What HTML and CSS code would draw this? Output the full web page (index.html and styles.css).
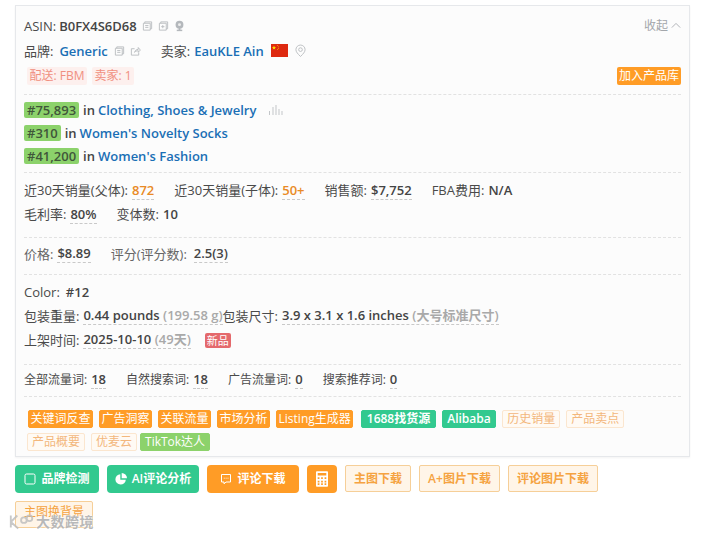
FILE: index.html
```html
<!DOCTYPE html>
<html lang="zh">
<head>
<meta charset="utf-8">
<title>ASIN</title>
<link rel="stylesheet" href="styles.css">
</head>
<body>
<div class="card">
  <section class="sec head">
    <div class="row r25 between">
      <div class="inline"><span class="lab lab-asin">ASIN:</span><b class="asin">B0FX4S6D68</b>
        <svg class="ic first" viewBox="0 0 12 12"><path d="M3 3V1.5h7.5V9H9M1.5 3H9v7.5H1.5zM3.500 5.500H7M3.500 7.500H7"/></svg>
        <svg class="ic" viewBox="0 0 12 12"><path d="M3 3V1.5h7.5V9H9M1.5 3H9v7.5H1.5zM3.500 6.700H7M5.200 5v3.400"/></svg>
        <svg class="ic fill" viewBox="0 0 12 12"><circle cx="6" cy="4.500" r="4.300"/><circle class="hole" cx="6" cy="4.500" r="1.600"/><rect x="3" y="10" width="6" height="1.600"/><rect x="5" y="8" width="2" height="3"/></svg>
      </div>
      <div class="collapse">收起<svg viewBox="0 0 12 8"><path d="M1 6.500 6 1.500l5 5"/></svg></div>
    </div>
    <div class="row r25">
      <span class="lab lab-brand">品牌:</span><a class="link">Generic</a>
      <svg class="ic gap8" viewBox="0 0 12 12"><path d="M3 3V1.5h7.5V9H9M1.5 3H9v7.5H1.5zM3.500 5.500H7M3.500 7.500H7"/></svg>
      <svg class="ic" viewBox="0 0 12 12"><path d="M9.500 7.500v3h-8v-7h3.500M5 7.500c.3-2 2-3.300 4-3.300V2.200l2.300 2.800L9 7.300V5.700c-1.600 0-3 .5-4 1.800z"/></svg>
      <span class="lab seller">卖家:</span><a class="link">EauKLE Ain</a>
      <svg class="flag" viewBox="0 0 17 13"><rect width="17" height="13" fill="#de2910"/><path fill="#ffde00" d="M3 1.500l.6 1.500 1.500.1-1.200 1 .4 1.500L3 4.800l-1.300.8.400-1.500-1.200-1 1.500-.1zM6 1h.7v.7H6zM7 2.500h.7v.7H7zM7 4h.7v.7H7zM6 5.200h.7v.7H6z"/></svg>
      <svg class="ic pin" viewBox="0 0 12 14"><path d="M6 13C3 10 1 8 1 5.500a5 5 0 0 1 10 0C11 8 9 10 6 13z"/><circle cx="6" cy="5.500" r="2"/></svg>
    </div>
    <div class="row between badges">
      <div class="inline"><span class="pink">配送: FBM</span><span class="pink">卖家: 1</span></div>
      <span class="add">加入产品库</span>
    </div>
  </section>

  <section class="sec ranks">
    <div class="rank"><span class="num">#75,893</span><b>in</b><a class="link">Clothing, Shoes &amp; Jewelry</a>
      <svg class="bars" viewBox="0 0 15 12"><path d="M1.500 7v4M5 3v8M8 1v10M11 5v6M14 7v4"/></svg></div>
    <div class="rank"><span class="num">#310</span><b>in</b><a class="link">Women's Novelty Socks</a></div>
    <div class="rank"><span class="num">#41,200</span><b>in</b><a class="link">Women's Fashion</a></div>
  </section>

  <section class="sec stats">
    <div class="row r24">
      <span class="item">近30天销量(父体):<b class="u or">872</b></span>
      <span class="item">近30天销量(子体):<b class="u or">50+</b></span>
      <span class="item">销售额:<b class="u">$7,752</b></span>
      <span class="item">FBA费用:<b>N/A</b></span>
    </div>
    <div class="row r24">
      <span class="item">毛利率:<b class="u">80%</b></span>
      <span class="item">变体数:<b>10</b></span>
    </div>
  </section>

  <section class="sec price">
    <div class="row">
      <span class="item"><span class="muted">价格:</span><b class="u">$8.89</b></span>
      <span class="item"><span class="muted">评分(评分数):</span><b class="u wide">2.5(3)</b></span>
    </div>
  </section>

  <section class="sec attrs">
    <div class="row r24">Color:<b class="plain">#12</b></div>
    <div class="row r24">包装重量:<b class="u tight">0.44 pounds <span class="grey">(199.58 g)</span></b>包装尺寸:<b class="u tight">3.9 x 3.1 x 1.6 inches <span class="grey">(大号标准尺寸)</span></b></div>
    <div class="row r24">上架时间:<b class="u tight">2025-10-10 <span class="grey">(49天)</span></b><span class="new">新品</span></div>
  </section>

  <section class="sec traffic">
    <div class="row">
      <span class="item"><span class="small">全部流量词:</span><b class="u">18</b></span>
      <span class="item"><span class="small">自然搜索词:</span><b class="u">18</b></span>
      <span class="item"><span class="small">广告流量词:</span><b class="u">0</b></span>
      <span class="item"><span class="small">搜索推荐词:</span><b class="u">0</b></span>
    </div>
  </section>

  <div class="tags">
    <span class="tag o">关键词反查</span><span class="tag o">广告洞察</span><span class="tag o">关联流量</span><span class="tag o">市场分析</span><span class="tag o">Listing生成器</span><span class="tag g">1688找货源</span><span class="tag g">Alibaba</span><span class="tag l">历史销量</span><span class="tag l">产品卖点</span><span class="tag l">产品概要</span><span class="tag l">优麦云</span><span class="tag t">TikTok达人</span>
  </div>
</div>

<div class="actions">
  <button class="btn green b1"><svg class="bi" viewBox="0 0 12 12"><rect x="1" y="1" width="10" height="10" rx="1.500"/></svg>品牌检测</button>
  <button class="btn green b2"><svg class="bi solid" viewBox="0 0 12 12"><path d="M5.300 1.200a5.200 5.200 0 1 0 5.500 5.500H5.300z"/><path d="M6.700 0v5.300H12A5.300 5.300 0 0 0 6.700 0z"/></svg>AI评论分析</button>
  <button class="btn orange b3"><svg class="bi" viewBox="0 0 12 12"><path d="M1.500 1.500h9v7.500H6l-2 1.800V9H1.500z"/><path d="M3.800 5.200h.8M5.700 5.200h.8M7.600 5.200h.8"/></svg>评论下载</button>
  <button class="btn orange calc"><svg viewBox="0 0 14 18"><path fill="#fff" fill-rule="evenodd" d="M1 0h12a1 1 0 0 1 1 1v16a1 1 0 0 1-1 1H1a1 1 0 0 1-1-1V1a1 1 0 0 1 1-1zm1 2v3h10V2zm0 5v2h2V7zm4 0v2h2V7zm4 0v2h2V7zm-8 4v2h2v-2zm4 0v2h2v-2zm4 0v2h2v-2zm-8 3v2h2v-2zm4 0v2h2v-2zm4 0v2h2v-2z"/></svg></button>
  <button class="btn light b5">主图下载</button>
  <button class="btn light b6">A+图片下载</button>
  <button class="btn light b7">评论图片下载</button>
  <button class="btn light b8">主图换背景</button>
</div>

<div class="mark"><svg viewBox="0 0 30 18"><path d="M3 2v13M3 9l7-7M3 9l8 7M14 7a3 3 0 1 1 6 0a3 3 0 1 1-6 0M20 5a3 3 0 1 1 6 0a3 3 0 1 1-6 0"/></svg><span>大数跨境</span></div>
</body>
</html>
```
FILE: styles.css
```css
* { box-sizing: border-box; }
html, body { margin: 0; padding: 0; }
body {
  position: relative;
  width: 709px;
  height: 536px;
  overflow: hidden;
  padding: 5px 0 0 15px;
  background: #fff;
  color: #4a4a4a;
  font: 13px/18px "Open Sans", "Noto Sans CJK SC", sans-serif;
}
b { font-weight: 600; color: #444; }
.card {
  width: 675px;
  height: 452px;
  padding: 0 8px;
  background: #fcfcfc;
  border: 1px solid #e6e8eb;
  box-shadow: 0 1px 2px rgba(0,0,0,.05);
}
.sec { border-bottom: 1px dashed #e2e2e2; }
.row { display: flex; align-items: center; white-space: nowrap; }
.inline { display: flex; align-items: center; }
.between { justify-content: space-between; }
.r25 { height: 25px; }
.r24 { height: 24px; }
.head { height: 89px; padding-top: 7px; }
.lab { margin-right: 4px; }
.lab-asin { margin-right: 3px; }
.lab-brand { margin-right: 6px; }
.asin { color: #444; }
.ic { width: 11px; height: 12px; margin-left: 5px; fill: none; stroke: #b9bcc0; stroke-width: 1; }
.ic.first { margin-left: 5px; }
.ic.fill { fill: #b4b8bc; stroke: none; }
.ic.fill .hole { fill: #eee; }
.gap8 { margin-left: 6px; }
.seller { margin-left: 20px; }
.flag { width: 17px; height: 13px; margin-left: 7px; }
.pin { height: 14px; margin-left: 7px; }
.link { color: #1a6fb5; font-weight: 600; }
.collapse { display: flex; align-items: center; color: #a3a6ab; font-size: 12px; }
.collapse svg { width: 10px; height: 7px; margin-left: 3px; fill: none; stroke: #a3a6ab; }
.badges { height: 18px; margin-top: 4px; font-size: 12px; }
.pink { margin: 0 5px 0 3px; padding: 0 2.5px; background: #fdf0ee; color: #f08f80; border-radius: 2px; }
.pink + .pink { margin-left: 0; }
.add { padding: 0 2px; height: 18px; background: #ff9c26; color: #fff; border-radius: 2px; }
.ranks { height: 78px; padding-top: 3px; }
.rank { display: flex; align-items: center; height: 23px; white-space: nowrap; }
.num { height: 16px; line-height: 16px; padding: 0 3px; margin-right: 4px; background: #8cd26b; color: #40563a; font-weight: 600; border-radius: 2px; }
.rank b { margin-right: 3px; }
.bars { width: 15px; height: 12px; margin-left: 12px; fill: none; stroke: #c3c6c9; }
.stats { height: 65px; padding-top: 5px; }
.item { display: inline-flex; align-items: center; margin-right: 20px; }
.item b { margin-left: 4px; }
.small { font-size: 12px; }
.u { border-bottom: 1px dashed #c9c9c9; }
.or { color: #e98a25; }
.item .wide { margin-left: 7px; }
.muted { color: #666; }
.price { height: 37px; padding-top: 6px; }
.attrs { height: 90px; padding-top: 5px; }
.plain { margin-left: 6px; }
.tight { margin-left: 4px; line-height: 17px; }
.grey { color: #a9a9a9; }
.new { margin-left: 14px; padding: 0 2px; height: 15px; line-height: 15px; font-size: 11px; background: #e4696c; color: #fff; border-radius: 2px; }
.traffic { height: 32px; padding-top: 5px; }
.tags { display: flex; flex-wrap: wrap; gap: 5px 6px; padding: 13px 0 0 4px; font-size: 12px; }
.tag { height: 18px; line-height: 16px; padding: 0 1.5px; border: 1px solid; border-radius: 2px; white-space: nowrap; }
.tag.o { background: #ff9c26; border-color: #ff9c26; color: #fff; }
.tag.g { background: #32c98f; border-color: #32c98f; color: #fff; font-weight: 600; padding: 0 4.5px; }
.tag.g:nth-child(6) { margin-left: 2px; }
.tag.l { background: #fffaf4; border-color: #fbe6cf; color: #f3b77c; padding: 0 4px; }
.tag.t { background: #8cd26b; border-color: #8cd26b; color: #fff; padding: 0 4px; margin-left: -3px; }
.tags .tag:nth-child(10) { margin-left: -1px; }
.actions { display: flex; flex-wrap: wrap; gap: 8px; margin-top: 8px; width: 600px; font-size: 12px; }
.btn { height: 28px; padding: 0; border: 0; border-radius: 4px; font: inherit; display: inline-flex; align-items: center; justify-content: center; }
.green { background: #32c98f; color: #fff; font-weight: 600; }
.orange { background: #ff9c26; color: #fff; font-weight: 600; }
.light { height: 27px; background: #fff5e8; border: 1px solid #f6cf98; border-radius: 2px; color: #f5a341; font-weight: 600; }
.bi { width: 12px; height: 12px; margin-right: 5px; fill: none; stroke: #fff; stroke-width: 1; }
.bi.solid { fill: #fff; stroke: none; }
.b1 { width: 84px; }
.b2 { width: 92px; }
.b3 { width: 92px; }
.calc { width: 30px; }
.calc svg { width: 12px; height: 16px; }
.b5 { width: 66px; }
.b6 { width: 81px; }
.b7 { width: 90px; }
.b8 { width: 78px; font-weight: 400; padding-bottom: 5px; }
.mark { position: absolute; left: 8px; top: 513px; display: flex; align-items: center; color: rgba(165,165,165,.8); font-size: 14px; font-weight: 700; letter-spacing: .5px; }
.mark svg { width: 28px; height: 18px; fill: none; stroke: rgba(190,190,190,.85); stroke-width: 2; }
.mark span { text-shadow: 0 0 2px #fff, 0 0 1px #fff; }
```
